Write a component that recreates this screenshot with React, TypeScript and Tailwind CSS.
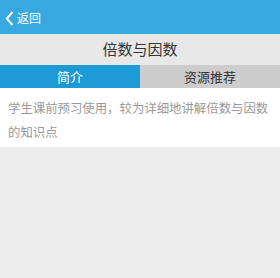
export default function App() {
  return (
    <div
      className="w-[280px] h-[278px] bg-[#ededed] flex flex-col"
      style={{ fontFamily: '"Noto Sans CJK SC", "Noto Sans", sans-serif' }}
    >
      <div className="h-[34px] bg-[#38a8e0] flex items-center pl-[5px] pt-[2px]">
        <svg width="9" height="15" viewBox="0 0 9 15" className="mr-[3px]">
          <path d="M7.5 1 L1.8 7.5 L7.5 14" fill="none" stroke="#fff" strokeWidth="2" />
        </svg>
        <span className="text-white text-[12px] leading-none">返回</span>
      </div>
      <div className="h-[31px] bg-[#e8e8e8] flex items-center justify-center text-[15px] text-[#333]">
        倍数与因数
      </div>
      <div className="h-[23px] flex text-[13px]">
        <div className="flex-1 bg-[#1b9ad6] text-white flex items-center justify-center">简介</div>
        <div className="flex-1 bg-[#cdcdcd] text-[#333] flex items-center justify-center">资源推荐</div>
      </div>
      <div className="bg-white px-[8px] pt-[8px] pb-[3px] text-[12.4px] leading-[24px] text-[#9a9a9a]">
        学生课前预习使用，较为详细地讲解倍数与因数的知识点
      </div>
    </div>
  )
}
